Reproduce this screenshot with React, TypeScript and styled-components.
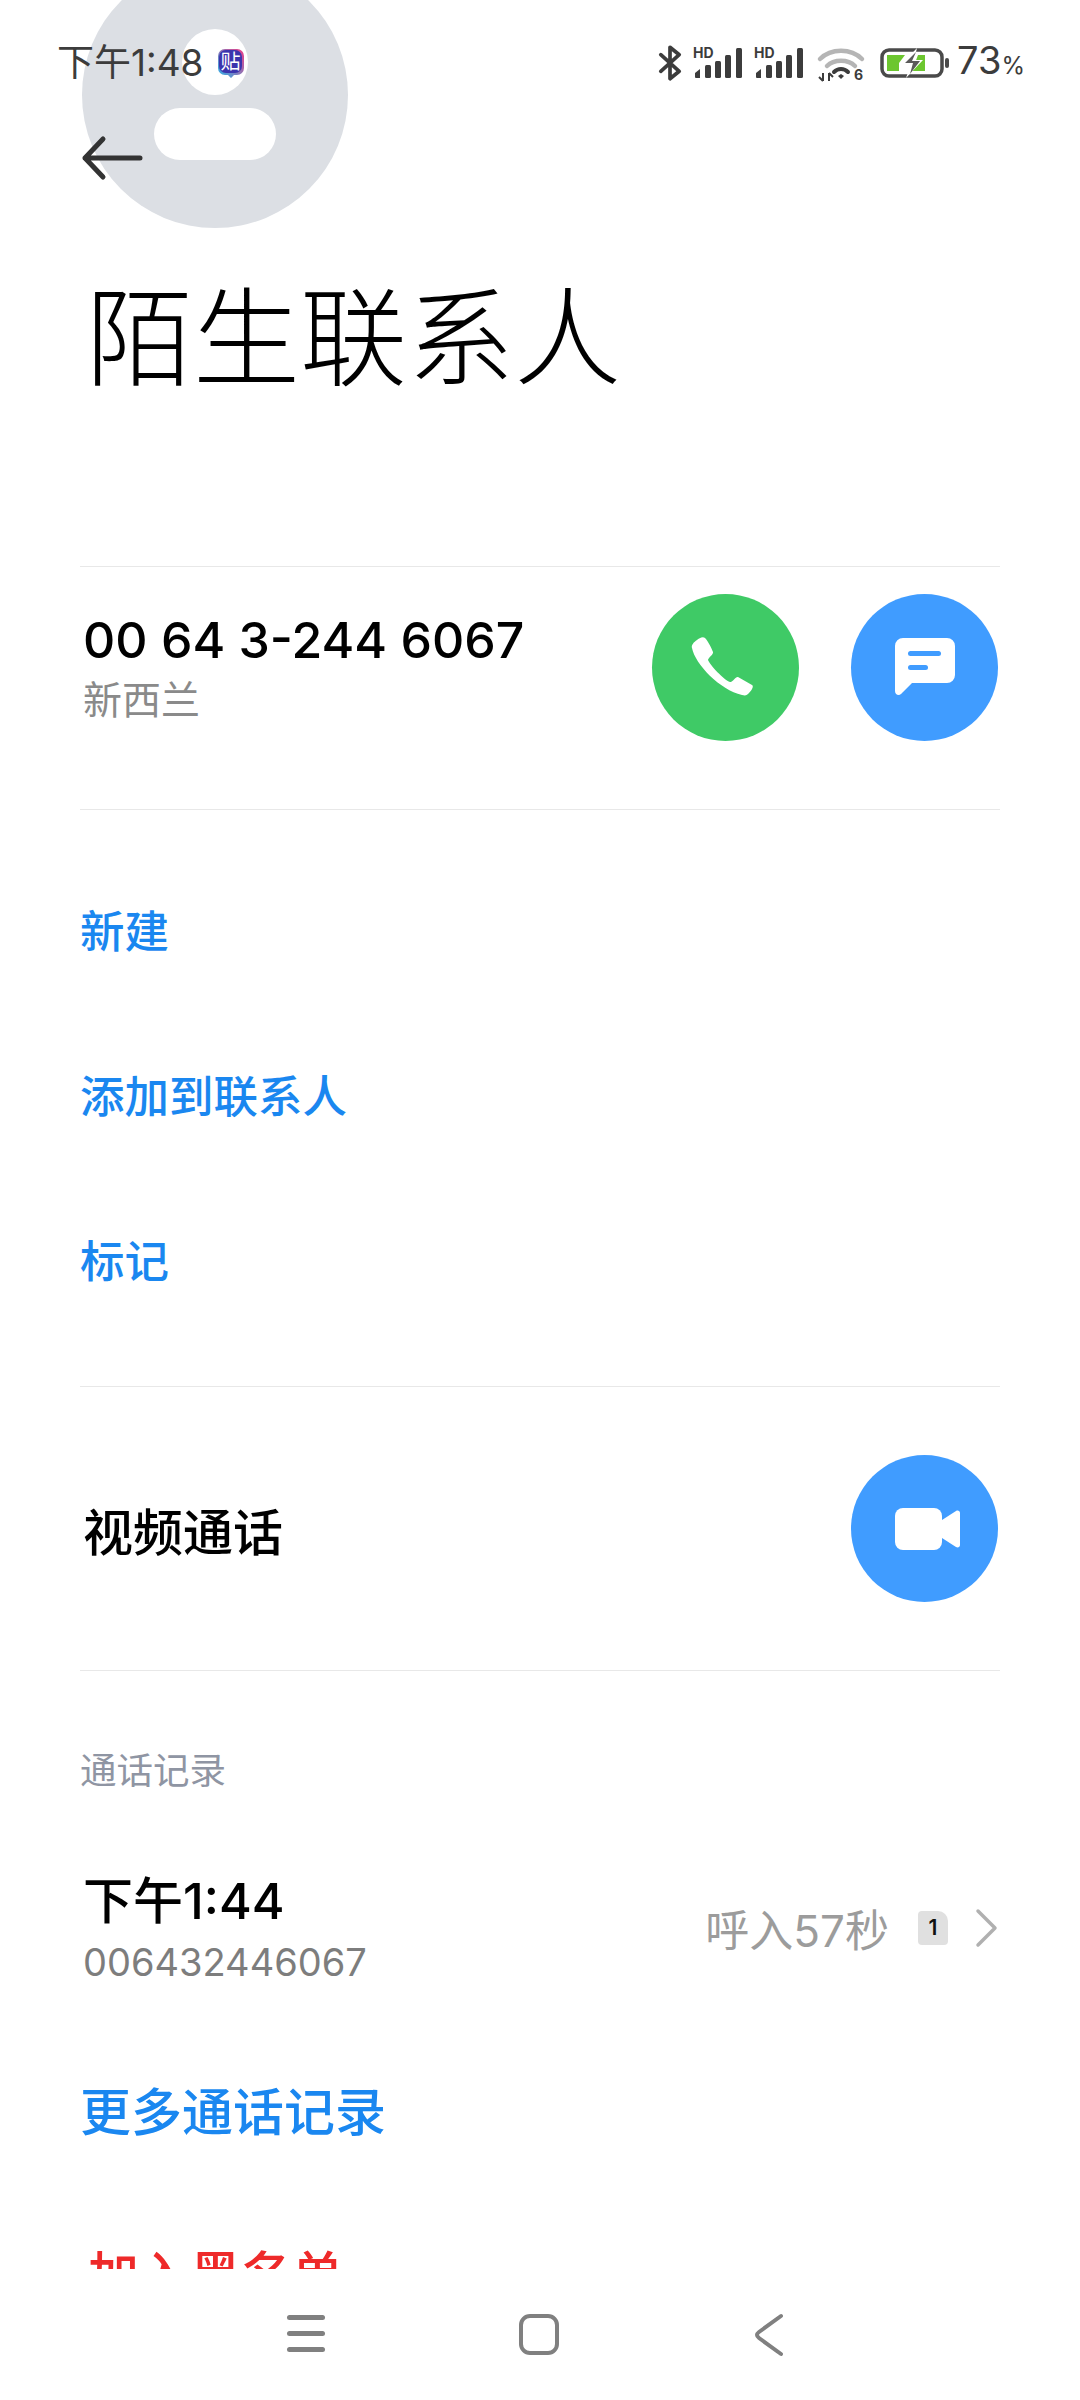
import React from "react";
import styled, { createGlobalStyle } from "styled-components";

const GlobalStyle = createGlobalStyle`
  html, body {
    margin: 0;
    padding: 0;
    background: #fff;
  }
  body {
    font-family: Inter, "Noto Sans CJK SC", sans-serif;
  }
  svg {
    overflow: visible;
    flex: none;
  }
`;

const Screen = styled.div`
  position: relative;
  width: 1080px;
  height: 2400px;
  overflow: hidden;
  background: #fff;
  display: flex;
  flex-direction: column;
`;

// Placeholder portrait, sits under the status bar and is cut by the screen edge
const Avatar = styled.div`
  position: absolute;
  left: 82px;
  top: -38px;
  width: 266px;
  height: 266px;
  border-radius: 50%;
  background: #dcdfe4;
`;

const AvatarHead = styled.div`
  position: absolute;
  left: 100px;
  top: 67px;
  width: 66px;
  height: 66px;
  border-radius: 50%;
  background: #fff;
`;

const AvatarBody = styled.div`
  position: absolute;
  left: 72px;
  top: 146px;
  width: 122px;
  height: 52px;
  border-radius: 26px;
  background: #fff;
`;

const StatusBar = styled.div`
  position: absolute;
  left: 57px;
  right: 55px;
  top: 39px;
  height: 48px;
  display: flex;
  align-items: center;
  justify-content: space-between;
  color: #3c3c3c;
`;

const StatusLeft = styled.div`
  display: flex;
  align-items: center;
  gap: 12px;
`;

const Clock = styled.span`
  font-size: 37px;
  line-height: 48px;
`;

const StatusIcons = styled.div`
  display: flex;
  align-items: center;
  gap: 11px;
`;

const BatteryText = styled.span`
  font-size: 38px;
  line-height: 48px;
  margin-left: -4px;
  small {
    font-size: 24px;
  }
`;

const Main = styled.main`
  position: relative;
  height: 2269px;
  overflow: hidden;
  padding: 0 80px;
  box-sizing: border-box;
  display: flex;
  flex-direction: column;
  flex: none;
`;

const BackButton = styled.button`
  border: 0;
  background: none;
  padding: 0;
  margin: 134px 0 0 2px;
  width: 60px;
  height: 48px;
  display: flex;
  flex: none;
`;

const Title = styled.h1`
  margin: 81px 0 0 6px;
  font-size: 107px;
  line-height: 150px;
  font-weight: 300;
  color: #000;
  flex: none;
`;

const Divider = styled.div<{ $top: number }>`
  height: 1px;
  flex: none;
  background: #e8e8e8;
  margin-top: ${(p) => p.$top}px;
`;

const NumberRow = styled.div`
  display: flex;
  align-items: center;
  justify-content: space-between;
  height: 242px;
  box-sizing: border-box;
  padding: 0 2px 42px 3px;
  flex: none;
`;

const NumberText = styled.div`
  font-size: 50px;
  line-height: 66px;
  font-weight: 500;
  color: #000;
`;

const SubText = styled.div`
  font-size: 39px;
  line-height: 54px;
  color: #8a8a8a;
`;

const CircleGroup = styled.div`
  display: flex;
  gap: 52px;
`;

const Circle = styled.div<{ $color: string }>`
  width: 147px;
  height: 147px;
  border-radius: 50%;
  background: ${(p) => p.$color};
  display: flex;
  align-items: center;
  justify-content: center;
`;

const ActionList = styled.div`
  display: flex;
  flex-direction: column;
  gap: 105px;
  padding: 92px 0 0;
  flex: none;
`;

const ActionLink = styled.div<{ $danger?: boolean; $large?: boolean }>`
  font-size: ${(p) => (p.$large ? 51 : 44.5)}px;
  line-height: 60px;
  font-weight: 500;
  color: ${(p) => (p.$danger ? "#ee2a2a" : "#1a87f0")};
`;

const VideoRow = styled.div`
  display: flex;
  align-items: center;
  justify-content: space-between;
  height: 283px;
  padding: 0 2px 0 3px;
  flex: none;
`;

const VideoLabel = styled.div`
  font-size: 50px;
  font-weight: 500;
  color: #000;
`;

const SectionLabel = styled.div`
  margin-top: 70px;
  font-size: 36.5px;
  line-height: 60px;
  color: #8f95a3;
  flex: none;
`;

const CallRow = styled.div`
  margin-top: 66px;
  display: flex;
  align-items: center;
  justify-content: space-between;
  padding: 0 3px 0 3px;
  flex: none;
`;

const CallTime = styled.div`
  font-size: 50px;
  line-height: 68px;
  font-weight: 500;
  color: #000;
`;

const CallNumber = styled.div`
  font-size: 38px;
  line-height: 54px;
  color: #7d7d7d;
`;

const CallMeta = styled.div`
  display: flex;
  align-items: center;
`;

const CallResult = styled.span`
  font-size: 44px;
  color: #9c9c9c;
  margin-right: 29px;
`;

const SimBadge = styled.span`
  width: 30px;
  height: 34px;
  box-sizing: border-box;
  background: #e0e0e0;
  border-radius: 4px 10px 4px 4px;
  font-size: 21px;
  line-height: 34px;
  font-weight: 600;
  text-align: center;
  color: #111;
  margin-right: 27px;
`;

const MoreBlock = styled.div`
  margin-top: 94px;
  flex: none;
`;

const BlockLink = styled.div`
  margin: 103px 0 0 8px;
  flex: none;
`;

const NavBar = styled.nav`
  flex: 1;
  display: flex;
  align-items: flex-start;
  justify-content: center;
  gap: 192px;
  padding-top: 45px;
  padding-right: 3px;
`;

const AppBadge = () => (
  <svg width="30" height="32" viewBox="0 0 30 32">
    <defs>
      <linearGradient id="badgeRim" x1="0" y1="1" x2="1" y2="0">
        <stop offset="0" stopColor="#27b4ea" />
        <stop offset="1" stopColor="#ee3a86" />
      </linearGradient>
    </defs>
    <path d="M9 2h12a7 7 0 0 1 7 7v12a7 7 0 0 1-7 7h-3l-3 3-3-3H9a7 7 0 0 1-7-7V9a7 7 0 0 1 7-7z" fill="url(#badgeRim)" />
    <rect x="3" y="3" width="23" height="23" rx="7" fill="#3b34ad" />
    <text x="14.5" y="22" fontSize="20" textAnchor="middle" fill="#fff" fontFamily="'Noto Sans CJK SC', sans-serif">
      贴
    </text>
  </svg>
);

const Bluetooth = () => (
  <svg width="24" height="38" viewBox="0 0 26 38" fill="none" stroke="#3c3c3c" strokeWidth="4" strokeLinejoin="round" strokeLinecap="round">
    <path d="M3 10l20 18-10 8V2l10 8L3 28" />
  </svg>
);

// Four rising bars under a small HD tag
const Signal = () => (
  <svg width="50" height="32" viewBox="0 0 50 32">
    <text x="0" y="11" fontSize="14" fontWeight="700" fill="#3c3c3c" fontFamily="Inter, sans-serif">
      HD
    </text>
    <path d="M2 26l5-4v9H3a1 1 0 0 1-1-1z" fill="#3c3c3c" />
    <rect x="12" y="18" width="6" height="13" rx="1.5" fill="#3c3c3c" />
    <rect x="22" y="14" width="6" height="17" rx="1.5" fill="#3c3c3c" />
    <rect x="32" y="8" width="6" height="23" rx="1.5" fill="#3c3c3c" />
    <rect x="43" y="1" width="6" height="30" rx="1.5" fill="#3c3c3c" />
  </svg>
);

const Wifi = () => (
  <svg width="54" height="38" viewBox="-3 0 54 38" fill="none">
    <path d="M2 15C13 4 33 4 44 15" stroke="#b5b5b5" strokeWidth="4.5" strokeLinecap="round" />
    <path d="M9 22c7-7 21-7 28 0" stroke="#b5b5b5" strokeWidth="4.5" strokeLinecap="round" />
    <path d="M16 28c4-4 10-4 14 0" stroke="#3c3c3c" strokeWidth="4" strokeLinecap="round" />
    <path d="M20 32l3-2 3 2-3 3z" fill="#3c3c3c" />
    <path d="M5 29v8M1 33l4 4M11 37v-8M15 33l-4-4" stroke="#3c3c3c" strokeWidth="2" />
    <text x="36" y="36" fontSize="14" fontWeight="700" fill="#3c3c3c" fontFamily="Inter, sans-serif">
      6
    </text>
  </svg>
);

const Battery = () => (
  <svg width="70" height="30" viewBox="0 0 70 30">
    <rect x="2" y="2" width="60" height="26" rx="7" fill="none" stroke="#4a4a4a" strokeWidth="3.5" />
    <path d="M7 7h18l-6 8H7zM7 15h12v8H7z" fill="#6cc62f" />
    <path d="M38 7h7v16H32z" fill="#6cc62f" />
    <path d="M37 0L22 16h9l-5 14 17-18h-9z" fill="#fff" />
    <path d="M36 4L25 15h8l-3 11 10-13h-8z" fill="#5a5a5a" />
    <rect x="65" y="10" width="4" height="10" rx="2" fill="#4a4a4a" />
  </svg>
);

const BackArrow = () => (
  <svg width="60" height="48" viewBox="0 0 60 48" fill="none" stroke="#333" strokeWidth="5" strokeLinecap="round" strokeLinejoin="round">
    <path d="M3 24h55M21 5L3 24l18 19" />
  </svg>
);

const PhoneGlyph = () => (
  <svg width="70" height="70" viewBox="0 0 70 70">
    <path
      d="M6 8c2-2 6-4 8-2 3 3 7 11 8 14 1 2-5 6-5 8 2 5 16 20 22 22 3 0 6-6 8-5l14 8c2 1 0 5-3 8-2 2-3 3-7 2C29 58 4 32 1 16c-1-3 2-6 5-8z"
      fill="#fff"
    />
  </svg>
);

const MessageGlyph = () => (
  <svg width="60" height="58" viewBox="0 0 60 58">
    <path
      d="M8 0h44a8 8 0 0 1 8 8v29a8 8 0 0 1-8 8H17L6 56c-2 2-6 1-6-3V8a8 8 0 0 1 8-8z"
      fill="#fff"
    />
    <rect x="13" y="13" width="33" height="5" rx="2.5" fill="#409cff" />
    <rect x="13" y="27" width="20" height="5" rx="2.5" fill="#409cff" />
  </svg>
);

const VideoGlyph = () => (
  <svg width="72" height="42" viewBox="-6 0 72 42">
    <rect x="0" y="0" width="47" height="42" rx="8" fill="#fff" />
    <path d="M47 12l14-9c2-1 4 0 4 2v32c0 2-2 3-4 2L47 30z" fill="#fff" />
  </svg>
);

const Chevron = () => (
  <svg width="22" height="40" viewBox="0 0 22 40" fill="none" stroke="#b0b0b0" strokeWidth="3.5" strokeLinecap="round" strokeLinejoin="round">
    <path d="M3 3l17 17L3 37" />
  </svg>
);

const NavMenu = () => (
  <svg width="40" height="40" viewBox="0 0 40 40" fill="#808080">
    <rect x="0" y="1" width="38" height="5" rx="2.5" />
    <rect x="0" y="17" width="38" height="5" rx="2.5" />
    <rect x="0" y="33" width="38" height="5" rx="2.5" />
  </svg>
);

const NavHome = () => (
  <svg width="40" height="40" viewBox="0 0 40 40" fill="none" stroke="#808080" strokeWidth="4">
    <rect x="2" y="2" width="36" height="37" rx="9" />
  </svg>
);

const NavBack = () => (
  <svg width="40" height="42" viewBox="0 0 40 42" fill="none" stroke="#808080" strokeWidth="4" strokeLinecap="round" strokeLinejoin="round">
    <path d="M30 2L8 18q-4 3 0 6l22 16" />
  </svg>
);

const App = () => {
  return (
    <Screen>
      <GlobalStyle />
      <Avatar>
        <AvatarHead />
        <AvatarBody />
      </Avatar>
      <Main>
        <BackButton>
          <BackArrow />
        </BackButton>
        <Title>陌生联系人</Title>
        <Divider $top={59 + 94} />
        <NumberRow>
          <div>
            <NumberText>00 64 3-244 6067</NumberText>
            <SubText>新西兰</SubText>
          </div>
          <CircleGroup>
            <Circle $color="#3fca66">
              <PhoneGlyph />
            </Circle>
            <Circle $color="#409cff">
              <MessageGlyph />
            </Circle>
          </CircleGroup>
        </NumberRow>
        <Divider $top={0} />
        <ActionList>
          <ActionLink>新建</ActionLink>
          <ActionLink>添加到联系人</ActionLink>
          <ActionLink>标记</ActionLink>
        </ActionList>
        <Divider $top={94} />
        <VideoRow>
          <VideoLabel>视频通话</VideoLabel>
          <Circle $color="#409cff">
            <VideoGlyph />
          </Circle>
        </VideoRow>
        <Divider $top={0} />
        <SectionLabel>通话记录</SectionLabel>
        <CallRow>
          <div>
            <CallTime>下午1:44</CallTime>
            <CallNumber>006432446067</CallNumber>
          </div>
          <CallMeta>
            <CallResult>呼入57秒</CallResult>
            <SimBadge>1</SimBadge>
            <Chevron />
          </CallMeta>
        </CallRow>
        <MoreBlock>
          <ActionLink $large>更多通话记录</ActionLink>
        </MoreBlock>
        <BlockLink>
          <ActionLink $large $danger>
            加入黑名单
          </ActionLink>
        </BlockLink>
      </Main>
      <NavBar>
        <NavMenu />
        <NavHome />
        <NavBack />
      </NavBar>
      <StatusBar>
        <StatusLeft>
          <Clock>下午1:48</Clock>
          <AppBadge />
        </StatusLeft>
        <StatusIcons>
          <Bluetooth />
          <Signal />
          <Signal />
          <Wifi />
          <Battery />
          <BatteryText>
            73<small>%</small>
          </BatteryText>
        </StatusIcons>
      </StatusBar>
    </Screen>
  );
};

export default App;
